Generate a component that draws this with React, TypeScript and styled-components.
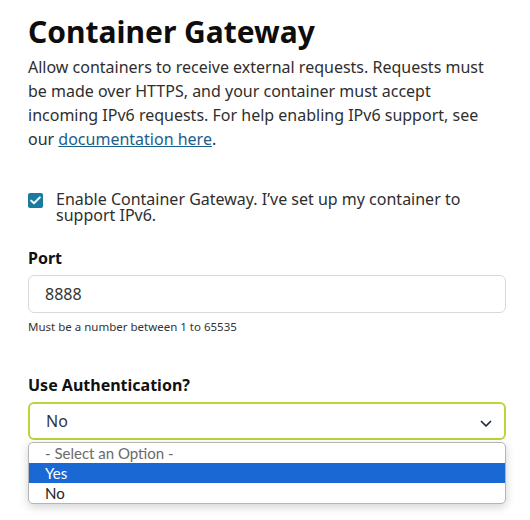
import styled, { createGlobalStyle } from "styled-components";

const GlobalStyle = createGlobalStyle`
  html, body {
    margin: 0;
    padding: 0;
    background: #ffffff;
  }
  body {
    font-family: "Noto Sans", "Open Sans", sans-serif;
    color: #2b2b2b;
  }
`;

const Page = styled.main`
  padding: 12px 24px 20px 28px;
`;

const Title = styled.h1`
  margin: 0;
  font-size: 30px;
  line-height: 40px;
  font-weight: 700;
  color: #0d0d0d;
`;

const Intro = styled.p`
  margin: 3px 0 0;
  max-width: 466px;
  font-size: 16px;
  line-height: 24px;
  color: #2e2e2e;

  a {
    color: #1d5d8c;
    text-decoration: underline;
  }
`;

const CheckRow = styled.label`
  display: flex;
  align-items: flex-start;
  gap: 13px;
  margin-top: 40px;
  font-size: 16px;
  line-height: 16px;
  color: #2e2e2e;
`;

const CheckBox = styled.span`
  flex: 0 0 15px;
  width: 15px;
  height: 15px;
  margin-top: 2px;
  border-radius: 2px;
  background: #1b7aa0;
  display: flex;
  align-items: center;
  justify-content: center;
`;

const Field = styled.div<{ $gap: number }>`
  margin-top: ${(p) => p.$gap}px;
`;

const Label = styled.div`
  font-size: 16px;
  font-weight: 700;
  line-height: 20px;
  color: #111;
  margin-bottom: 7px;
`;

const Box = styled.div<{ $focused?: boolean }>`
  box-sizing: border-box;
  height: 38px;
  display: flex;
  align-items: center;
  justify-content: space-between;
  padding: 0 12px 0 16px;
  border: ${(p) => (p.$focused ? "2px solid #b9d63a" : "1px solid #d6dade")};
  border-radius: 6px;
  font-size: 16px;
  color: #333;
  background: #fff;
`;

const Chevron = styled.svg`
  margin-top: 6px;
`;

const Hint = styled.div`
  margin-top: 7px;
  font-size: 11.5px;
  line-height: 14px;
  color: #333;
`;

const Options = styled.ul`
  margin: 2px 0 0;
  padding: 0;
  list-style: none;
  background: #fff;
  border: 1px solid #b5b5b5;
  border-radius: 5px;
  overflow: hidden;
  box-shadow: 0 3px 10px rgba(0, 0, 0, 0.18);
  font-family: Lato, "Noto Sans", sans-serif;
  font-size: 15px;
`;

const OptionItem = styled.li<{ $active?: boolean; $muted?: boolean }>`
  height: 20px;
  line-height: 20px;
  padding-left: 16px;
  background: ${(p) => (p.$active ? "#1a68d3" : "transparent")};
  color: ${(p) => (p.$active ? "#fff" : p.$muted ? "#6b6b6b" : "#222")};
`;

export default function App() {
  return (
    <Page>
      <GlobalStyle />
      <Title>Container Gateway</Title>
      <Intro>
        Allow containers to receive external requests. Requests must be made
        over HTTPS, and your container must accept incoming IPv6 requests. For
        help enabling IPv6 support, see our <a href="#">documentation here</a>.
      </Intro>

      <CheckRow>
        <CheckBox>
          <svg width="11" height="9" viewBox="0 0 11 9">
            <path
              d="M1.2 4.6 L4 7.3 L9.8 1.4"
              fill="none"
              stroke="#fff"
              strokeWidth="2"
              strokeLinecap="round"
              strokeLinejoin="round"
            />
          </svg>
        </CheckBox>
        <span>
          Enable Container Gateway. I’ve set up my container to support IPv6.
        </span>
      </CheckRow>

      <Field $gap={25}>
        <Label>Port</Label>
        <Box>8888</Box>
        <Hint>Must be a number between 1 to 65535</Hint>
      </Field>

      <Field $gap={41}>
        <Label>Use Authentication?</Label>
        <Box $focused>
          <span>No</span>
          <Chevron width="12" height="8" viewBox="0 0 12 8">
            <path
              d="M1.5 1.5 L6 6 L10.5 1.5"
              fill="none"
              stroke="#1e2a3a"
              strokeWidth="1.7"
              strokeLinecap="round"
              strokeLinejoin="round"
            />
          </Chevron>
        </Box>
        <Options>
          <OptionItem $muted>- Select an Option -</OptionItem>
          <OptionItem $active>Yes</OptionItem>
          <OptionItem>No</OptionItem>
        </Options>
      </Field>
    </Page>
  );
}
